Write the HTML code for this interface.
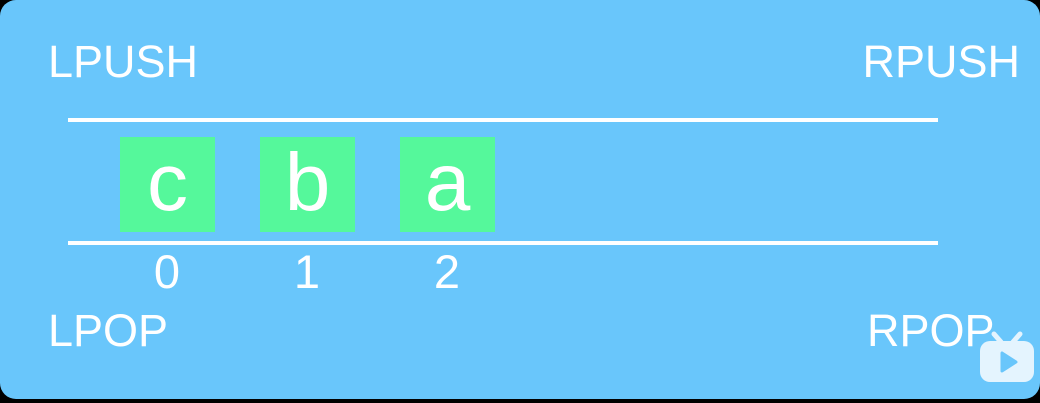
<!DOCTYPE html>
<html><head><style>
body{margin:0;width:1040px;height:403px;background:#000;overflow:hidden;font-family:"Liberation Sans",sans-serif;}
.card{position:absolute;left:0;top:0;width:1040px;height:399px;background:#69c6fb;border-radius:16px;}
.t{position:absolute;color:#fff;font-size:45px;line-height:1;}
.ln{position:absolute;left:68px;width:870px;height:4px;background:#fff;}
.b{position:absolute;top:137px;width:95px;height:95px;background:#55f89b;color:#fff;font-size:82px;text-align:center;line-height:92px;}
.n{position:absolute;top:250px;width:60px;text-align:center;color:#fff;font-size:47px;line-height:44px;}
</style></head><body>
<div class="card">
<div class="t" style="left:48px;top:39px">LPUSH</div>
<div class="t" style="right:20px;top:39px">RPUSH</div>
<div class="t" style="left:48px;top:308px">LPOP</div>
<div class="t" style="left:867px;top:308px">RPOP</div>
<div class="ln" style="top:118px"></div>
<div class="ln" style="top:241px"></div>
<div class="b" style="left:120px">c</div>
<div class="b" style="left:260px">b</div>
<div class="b" style="left:400px">a</div>
<div class="n" style="left:137px">0</div>
<div class="n" style="left:277px">1</div>
<div class="n" style="left:417px">2</div>
<svg style="position:absolute;left:978px;top:328px" width="58" height="56" viewBox="0 0 58 56">
<path d="M16 6 L23 14 M42 6 L35 14" stroke="#e4f4fe" stroke-width="5" stroke-linecap="round"/>
<rect x="2" y="13" width="54" height="41" rx="10" fill="#e4f4fe"/>
<path d="M24 25 L24 43 L38 34 Z" fill="#69c6fb" stroke="#69c6fb" stroke-width="3" stroke-linejoin="round"/>
</svg>
</div>
</body></html>
